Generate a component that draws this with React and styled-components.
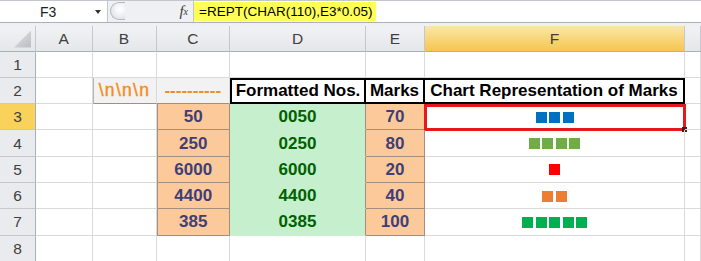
import React from "react";
import styled, { createGlobalStyle, css } from "styled-components";

const GlobalStyle = createGlobalStyle`
  html, body {
    margin: 0;
    padding: 0;
    background: #ffffff;
    overflow: hidden;
  }
`;

const Page = styled.div`
  width: 701px;
  height: 261px;
  background: #eef0f3;
  display: flex;
  flex-direction: column;
  gap: 3px;
  overflow: hidden;
`;

/* ---------- formula bar ---------- */

const FormulaBar = styled.div`
  box-sizing: border-box;
  height: 23px;
  flex: none;
  display: flex;
  border-top: 1px solid #c3c7cd;
  border-bottom: 1px solid #aab0b8;
  background: #eef0f3;
  font-family: "Liberation Sans", Arial, sans-serif;
`;

const NameBox = styled.div`
  width: 108px;
  display: flex;
  align-items: center;
  padding-left: 40px;
  box-sizing: border-box;
  background: #fff;
  border-right: 1px solid #c3c7cd;
  font-size: 14px;
  color: #222;
`;

const DropArrow = styled.span`
  margin-left: auto;
  margin-right: 6px;
  width: 0;
  height: 0;
  border-left: 3px solid transparent;
  border-right: 3px solid transparent;
  border-top: 4px solid #333;
`;

const Grip = styled.div`
  margin: 1px 0 0 2px;
  width: 15px;
  height: 18px;
  box-sizing: border-box;
  border: 1px solid #b4b9c1;
  border-right: none;
  border-radius: 10px 0 0 10px;
  background: radial-gradient(circle at 65% 40%, #ffffff 0, #f4f5f7 35%, #d4d8de 100%);
`;

const FxButton = styled.div`
  margin-left: auto;
  margin-right: 5px;
  display: flex;
  align-items: center;
  font-family: "Liberation Serif", "Times New Roman", serif;
  font-style: italic;
  font-size: 15px;
  color: #3a3a3a;

  sub {
    font-size: 10px;
    vertical-align: -1px;
  }
`;

const FormulaInput = styled.div`
  width: 507px;
  display: flex;
  align-items: center;
  background: #fff;
  border-left: 1px solid #c3c7cd;
`;

const Highlight = styled.span`
  background: #ffff55;
  padding: 2px 4px 2px 5px;
  font-size: 13.5px;
  line-height: 15px;
  color: #000;
`;

/* ---------- sheet ---------- */

const Sheet = styled.div`
  display: grid;
  grid-template-columns: 36px 56.5px 64px 73.5px 136px 59px 260px 1fr;
  grid-template-rows: 25.5px repeat(8, 26.3px);
  background: #fff;
`;

const headerBase = css`
  box-sizing: border-box;
  display: flex;
  align-items: center;
  justify-content: center;
  font-family: "Liberation Sans", Arial, sans-serif;
  font-size: 15.5px;
  color: #404040;
  padding-top: 1px;
`;

const Corner = styled.div`
  ${headerBase};
  justify-content: flex-end;
  align-items: flex-end;
  padding: 0 4px 3px 0;
  background: linear-gradient(#f1f2f4, #e4e7ea);
  border-right: 1px solid #c4c8ce;
  border-bottom: 1px solid #aab0b8;
`;

const CornerTriangle = styled.div`
  width: 17px;
  height: 17px;
  clip-path: polygon(100% 0, 100% 100%, 0 100%);
  background: linear-gradient(135deg, #e0e3e7, #b9bdc3);
`;

const ColHead = styled.div`
  ${headerBase};
  background: ${(p) =>
    p.$active
      ? "linear-gradient(#fbe6a8, #f5c64f)"
      : "linear-gradient(#f1f2f4, #e4e7ea)"};
  border-right: 1px solid #c4c8ce;
  border-bottom: 1px solid #aab0b8;
`;

const RowHead = styled.div`
  ${headerBase};
  background: ${(p) => (p.$active ? "#f9d25c" : "#e9ebee")};
  border-right: 1px solid #aab0b8;
  border-bottom: 1px solid #c4c8ce;
`;

const brown = "#a48f7e";
const grid = "#d9dadc";

const variants = {
  plain: css``,
  label: css`
    background: #f2f2f2;
    color: #f28c22;
    border-bottom-color: ${brown};
  `,
  head: css`
    color: #000;
    border-top: 2px solid #000;
    border-right: 2px solid #000;
    border-bottom: 2px solid #000;
  `,
  input: css`
    background: #fcc99a;
    color: #3f3f76;
    border-right-color: ${brown};
    border-bottom-color: ${brown};
  `,
  good: css`
    background: #c6efce;
    color: #006100;
    border-bottom-color: #c6efce;
    border-right-color: ${brown};
  `,
};

const Cell = styled.div`
  box-sizing: border-box;
  position: relative;
  display: flex;
  align-items: center;
  justify-content: center;
  padding-top: 1px;
  border-right: 1px solid ${grid};
  border-bottom: 1px solid ${grid};
  font-family: "Liberation Sans", Arial, sans-serif;
  font-size: 17px;
  font-weight: 700;
  white-space: nowrap;
  ${(p) => variants[p.$variant || "plain"]};
  ${(p) => p.$edgeLeft && `border-left: ${p.$edgeLeft};`}
`;

const Escapes = styled.span`
  font-size: 17.5px;
  font-weight: 400;
  letter-spacing: 1.3px;
  -webkit-text-stroke: 0.4px #f28c22;
`;

const Squares = styled.div`
  display: flex;
  gap: 2.5px;
`;

const Square = styled.span`
  width: 11px;
  height: 11px;
  background: ${(p) => p.$color};
`;

const Selection = styled.div`
  position: absolute;
  top: 0;
  left: -1px;
  right: -2px;
  bottom: -2px;
  border: 3px solid #e3191b;
  pointer-events: none;

  &::after {
    content: "";
    position: absolute;
    right: -4px;
    bottom: -4px;
    width: 5px;
    height: 5px;
    background: #4a1a1a;
  }
`;

// G is only a sliver at the right edge, its letter falls outside the window
const COLS = ["A", "B", "C", "D", "E", "F", "G"];

const data = [
  { n: 3, c: "50", d: "0050", e: 70, color: "#0070c0" },
  { n: 4, c: "250", d: "0250", e: 80, color: "#70ad47" },
  { n: 5, c: "6000", d: "6000", e: 20, color: "#ff0000" },
  { n: 6, c: "4400", d: "4400", e: 40, color: "#ed7d31" },
  { n: 7, c: "385", d: "0385", e: 100, color: "#00b050" },
];

function EmptyRow({ n }) {
  return (
    <>
      <RowHead>{n}</RowHead>
      {COLS.map((c) => (
        <Cell key={c} />
      ))}
    </>
  );
}

function DataRow({ row }) {
  const count = Math.floor(row.e * 0.05);
  return (
    <>
      <RowHead $active={row.n === 3}>{row.n}</RowHead>
      <Cell />
      <Cell />
      <Cell $variant="input" $edgeLeft={`1px solid ${brown}`}>
        {row.c}
      </Cell>
      <Cell $variant="good">{row.d}</Cell>
      <Cell $variant="input">{row.e}</Cell>
      <Cell>
        <Squares>
          {Array.from({ length: count }, (_, i) => (
            <Square key={i} $color={row.color} />
          ))}
        </Squares>
        {row.n === 3 && <Selection />}
      </Cell>
      <Cell />
    </>
  );
}

export default function App() {
  return (
    <>
      <GlobalStyle />
      <Page>
        <FormulaBar>
          <NameBox>
            F3
            <DropArrow />
          </NameBox>
          <Grip />
          <FxButton>
            f<sub>x</sub>
          </FxButton>
          <FormulaInput>
            <Highlight>=REPT(CHAR(110),E3*0.05)</Highlight>
          </FormulaInput>
        </FormulaBar>

        <Sheet>
          <Corner>
            <CornerTriangle />
          </Corner>
          {COLS.map((c) => (
            <ColHead key={c} $active={c === "F"}>
              {c === "G" ? null : c}
            </ColHead>
          ))}

          <EmptyRow n={1} />

          <RowHead>2</RowHead>
          <Cell />
          <Cell $variant="label" $edgeLeft="1px solid #b5b5b5">
            <Escapes>\n\n\n</Escapes>
          </Cell>
          <Cell $variant="label">----------</Cell>
          <Cell $variant="head" $edgeLeft="2px solid #000">
            Formatted Nos.
          </Cell>
          <Cell $variant="head">Marks</Cell>
          <Cell $variant="head">Chart Representation of Marks</Cell>
          <Cell />

          {data.map((row) => (
            <DataRow key={row.n} row={row} />
          ))}

          <EmptyRow n={8} />
        </Sheet>
      </Page>
    </>
  );
}
